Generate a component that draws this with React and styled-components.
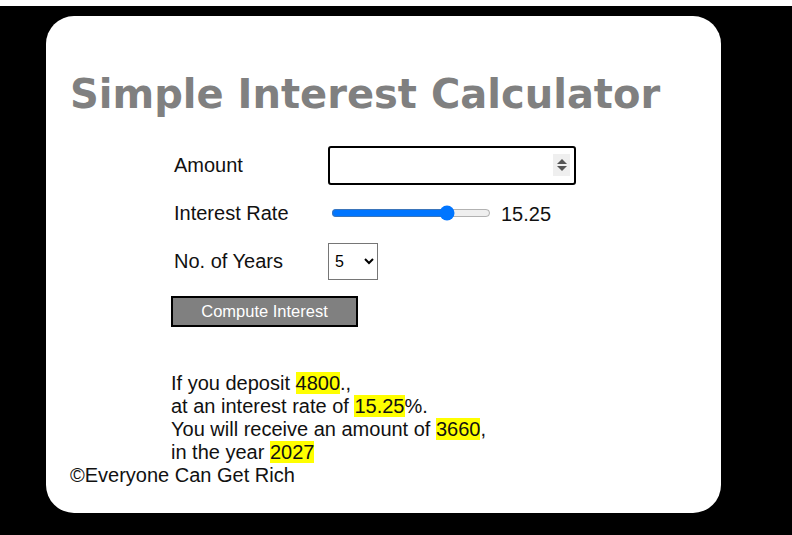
import React from "react";
import styled, { createGlobalStyle } from "styled-components";

const Global = createGlobalStyle`
  html, body { margin: 0; padding: 0; background: #ffffff; }
  body { font-family: "Liberation Sans", Arial, sans-serif; }
`;

const Stage = styled.div`
  margin-top: 6px;
  background: #000;
  height: 529px;
  padding: 10px 0 0 46px;
  box-sizing: border-box;
`;

const Card = styled.div`
  width: 675px;
  height: 497px;
  background: #fff;
  border-radius: 28px;
  box-sizing: border-box;
  padding: 54px 0 0 24px;
  display: flex;
  flex-direction: column;
`;

const Title = styled.h1`
  margin: 0;
  font-family: Verdana, "DejaVu Sans", sans-serif;
  font-weight: bold;
  font-size: 40px;
  line-height: 48px;
  color: #808080;
  white-space: nowrap;
`;

const Form = styled.div`
  margin: 23px 0 0 101px;
  display: grid;
  grid-template-columns: 157px auto;
  grid-auto-rows: 48px;
  align-items: center;
`;

const Label = styled.div`
  padding-left: 3px;
  font-size: 20px;
  color: #111;
`;

const InputWrap = styled.div`
  position: relative;
  width: 248px;
  height: 39px;
`;

const NumberBox = styled.input`
  width: 100%;
  height: 100%;
  box-sizing: border-box;
  border: 2px solid #000;
  border-radius: 3px;
  font-size: 16px;
  padding: 0 8px;
  background: #fff;
`;

const Spinner = styled.div`
  position: absolute;
  right: 6px;
  top: 8px;
  width: 17px;
  height: 22px;
  background: #efefef;
  display: flex;
  flex-direction: column;
  align-items: center;
  justify-content: center;
  gap: 2px;
`;

const Tri = styled.div`
  width: 0;
  height: 0;
  border-left: 5px solid transparent;
  border-right: 5px solid transparent;
  ${(p) => (p.$up ? "border-bottom: 5px solid #555;" : "border-top: 5px solid #555;")}
`;

const RangeRow = styled.div`
  display: flex;
  align-items: center;
  gap: 10px;
  font-size: 20px;
  color: #111;
`;

const Range = styled.input`
  width: 160px;
  margin: 0 0 0 3px;
  accent-color: #0075ff;
`;

const Value = styled.span`
  margin-top: 3px;
`;

const Select = styled.select`
  width: 50px;
  height: 37px;
  font-size: 16px;
  font-family: "Liberation Sans", Arial, sans-serif;
  border: 1px solid #767676;
  border-radius: 0;
  background: #fff;
  color: #000;
  padding: 0 2px;
`;

const Button = styled.button`
  grid-column: 1 / span 2;
  width: 187px;
  height: 31px;
  margin-top: 4px;
  background: #808080;
  color: #fff;
  border: 2px solid #000;
  font-family: "Liberation Sans", Arial, sans-serif;
  font-size: 16.5px;
  padding: 0;
`;

const Result = styled.div`
  margin: 39px 0 0 101px;
  font-size: 20px;
  line-height: 23px;
  color: #111;
`;

const Mark = styled.span`
  background: #ffff00;
`;

const Footer = styled.div`
  font-size: 20px;
  line-height: 23px;
  color: #111;
`;

export default function App() {
  return (
    <>
      <Global />
      <Stage>
        <Card>
          <Title>Simple Interest Calculator</Title>
          <Form>
            <Label>Amount</Label>
            <InputWrap>
              <NumberBox type="text" />
              <Spinner>
                <Tri $up />
                <Tri />
              </Spinner>
            </InputWrap>
            <Label>Interest Rate</Label>
            <RangeRow>
              <Range type="range" min="1" max="20" step="0.25" defaultValue="15.25" />
              <Value>15.25</Value>
            </RangeRow>
            <Label>No. of Years</Label>
            <div>
              <Select defaultValue="5">
                {[1, 2, 3, 4, 5, 6, 7, 8, 9, 10].map((n) => (
                  <option key={n} value={n}>{n}</option>
                ))}
              </Select>
            </div>
            <Button>Compute Interest</Button>
          </Form>
          <Result>
            If you deposit <Mark>4800</Mark>.,<br />
            at an interest rate of <Mark>15.25</Mark>%.<br />
            You will receive an amount of <Mark>3660</Mark>,<br />
            in the year <Mark>2027</Mark>
          </Result>
          <Footer>©Everyone Can Get Rich</Footer>
        </Card>
      </Stage>
    </>
  );
}
